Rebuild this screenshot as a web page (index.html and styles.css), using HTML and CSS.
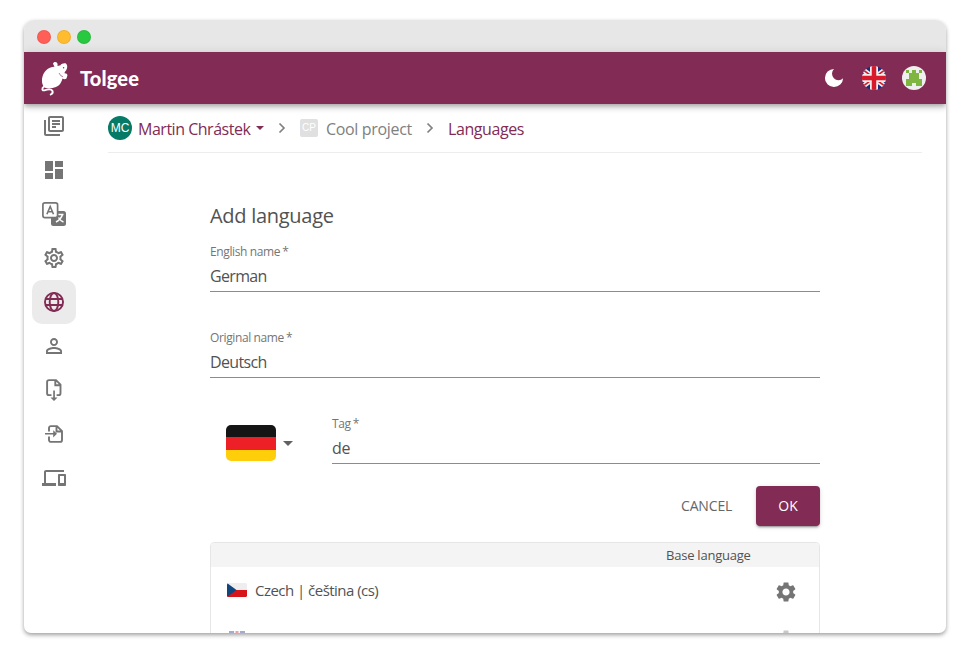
FILE: index.html
```
<!DOCTYPE html>
<html lang="en">
<head>
<meta charset="utf-8">
<title>Tolgee</title>
<link rel="stylesheet" href="styles.css">
</head>
<body>
<div class="window">
  <div class="titlebar"><span class="dot red"></span><span class="dot yellow"></span><span class="dot green"></span></div>
  <header class="appbar">
    <svg class="logo" viewBox="0 0 30 36" width="30" height="36" fill="#fff">
      <path d="M13 2.800C13.600.300 17.500.500 17.600 3.500L17.500 5Q19 4.400 20.200 4.600C21.500 2.300 26 1.500 26.700 3.500C28 5.500 27 9 24.800 11L24.500 12.200Q27.500 12.300 27.400 14.500L26.500 17.500Q24.500 19 22.500 17.500Q21 24 16 26Q10 28.500 5 26.800Q1.500 24.500 2 18C3 11 8 6 14.500 5.800Z"/>
      <path d="M4 25.500C1.500 27.500 2 30 4.500 29.300C8 28.200 11.500 28 12.500 30C13.200 31.800 12.200 32.800 10.700 33.500" fill="none" stroke="#fff" stroke-width="1.900" stroke-linecap="round"/>
      <circle cx="23.600" cy="6.700" r=".7" fill="#822b55"/>
      <path d="M19 12q1.500 3.500 4 3.700" fill="none" stroke="#822b55" stroke-width=".6"/>
    </svg>
    <span class="brand">Tolgee</span>
    <div class="tools">
      <svg width="20" height="20" viewBox="0 0 20 20"><path d="M10 .9A9.100 9.100 0 1 0 19.100 10.300 5.600 5.600 0 0 1 10 .9Z" fill="#fff"/></svg>
      <svg width="24" height="24" viewBox="0 0 24 24"><clipPath id="round"><circle cx="12" cy="12" r="12"/></clipPath><g clip-path="url(#round)"><path fill="#1a2b7b" d="M0 0h24v24H0z"/><path d="M-4 0 28 24M28 0-4 24" stroke="#eee" stroke-width="5"/><path d="M-4 0 28 24M28 0-4 24" stroke="#d8182b" stroke-width="1.600"/><path d="M12 0v24M0 12h24" stroke="#eee" stroke-width="8"/><path d="M12 0v24M0 12h24" stroke="#d8182b" stroke-width="4.500"/></g></svg>
      <svg width="24" height="24" viewBox="0 0 24 24"><circle cx="12" cy="12" r="12" fill="#efefef"/><path fill="#7fb541" d="M4 4h3v3H4zM17 4h3v3h-3zM10 4h4v3h3v6h3v7h-6v-3h-4v3H4v-7h3V7h3z"/></svg>
    </div>
  </header>
  <div class="body">
    <nav class="side">
      <a><svg viewBox="0 0 24 24"><path d="M4 6H2v14c0 1.100.9 2 2 2h14v-2H4V6zm16-4H8c-1.100 0-2 .9-2 2v12c0 1.100.9 2 2 2h12c1.100 0 2-.9 2-2V4c0-1.100-.9-2-2-2zm0 14H8V4h12v12zM10 9h8v2h-8zm0 3h4v2h-4zm0-6h8v2h-8z"/></svg></a>
      <a><svg viewBox="0 0 24 24"><path d="M3 13h8V3H3v10zm0 8h8v-6H3v6zm10 0h8V11h-8v10zm0-18v6h8V3h-8z"/></svg></a>
      <a><svg viewBox="0 0 24 24"><rect x="9" y="9" width="15" height="15" rx="2.500"/><path d="M16 12.500h5.500M20.500 12.500q-1.500 5-6.500 7.500M16.500 15.500q2 3.500 5 4.500" fill="none" stroke="#fff" stroke-width="1.500"/><rect x=".9" y=".9" width="14.700" height="14.700" rx="2" fill="#fff" stroke="#757575" stroke-width="1.700"/><path d="M4.900 12.200 8.200 4.500 11.500 12.200M6.200 9.800h4" fill="none" stroke="#757575" stroke-width="1.600"/></svg></a>
      <a><svg viewBox="0 0 24 24"><path d="M19.430 12.980c.04-.32.07-.64.07-.98 0-.34-.03-.66-.07-.98l2.110-1.650c.19-.15.24-.42.12-.64l-2-3.460c-.09-.16-.26-.25-.44-.25-.06 0-.12.01-.17.03l-2.490 1c-.52-.4-1.080-.73-1.690-.98l-.38-2.650C14.460 2.180 14.250 2 14 2h-4c-.25 0-.46.18-.49.42l-.38 2.650c-.61.25-1.170.59-1.690.98l-2.490-1c-.06-.02-.12-.03-.18-.03-.17 0-.34.09-.43.25l-2 3.460c-.13.22-.07.49.12.64l2.110 1.650c-.04.32-.07.65-.07.98 0 .33.03.66.07.98l-2.110 1.650c-.19.15-.24.42-.12.64l2 3.460c.09.16.26.25.44.25.06 0 .12-.01.17-.03l2.490-1c.52.4 1.080.73 1.690.98l.38 2.650c.03.24.24.42.49.42h4c.25 0 .46-.18.49-.42l.38-2.650c.61-.25 1.170-.59 1.690-.98l2.490 1c.06.02.12.03.18.03.17 0 .34-.09.43-.25l2-3.460c.12-.22.07-.49-.12-.64l-2.110-1.650zm-1.980-1.710c.04.31.05.52.05.73 0 .21-.02.43-.05.73l-.14 1.130.89.7 1.080.84-.7 1.210-1.270-.51-1.040-.42-.9.68c-.43.32-.84.56-1.250.73l-1.060.43-.16 1.130-.2 1.350h-1.400l-.19-1.350-.16-1.130-1.060-.43c-.43-.18-.83-.41-1.230-.71l-.91-.7-1.060.43-1.270.51-.7-1.210 1.080-.84.89-.7-.14-1.130c-.03-.31-.05-.54-.05-.74s.02-.43.05-.73l.14-1.130-.89-.7-1.080-.84.7-1.210 1.270.51 1.040.42.9-.68c.43-.32.84-.56 1.250-.73l1.060-.43.16-1.130.2-1.350h1.390l.19 1.350.16 1.130 1.060.43c.43.18.83.41 1.230.71l.91.7 1.060-.43 1.270-.51.7 1.210-1.070.85-.89.7.14 1.130zM12 8c-2.210 0-4 1.790-4 4s1.790 4 4 4 4-1.790 4-4-1.790-4-4-4zm0 6c-1.100 0-2-.9-2-2s.9-2 2-2 2 .9 2 2-.9 2-2 2z"/></svg></a>
      <a class="active"><svg viewBox="0 0 24 24"><g fill="none" stroke="#822b55" stroke-width="1.900"><circle cx="12" cy="12" r="9.050"/><ellipse cx="12" cy="12" rx="4.300" ry="9.050"/><path d="M3.500 9h17M3.500 15h17"/></g></svg></a>
      <a><svg viewBox="0 0 24 24"><path d="M12 5.900c1.160 0 2.100.94 2.100 2.100s-.94 2.100-2.100 2.100S9.900 9.160 9.900 8s.94-2.100 2.100-2.100m0 9c2.970 0 6.100 1.460 6.100 2.100v1.100H5.900V17c0-.64 3.130-2.100 6.100-2.100M12 4C9.790 4 8 5.790 8 8s1.790 4 4 4 4-1.790 4-4-1.790-4-4-4zm0 9c-2.670 0-8 1.340-8 4v3h16v-3c0-2.660-5.330-4-8-4z"/></svg></a>
      <a><svg viewBox="0 0 24 24"><path d="M9.500 17.100H7a1.900 1.900 0 0 1-1.900-1.900V4A1.900 1.900 0 0 1 7 2.100h7l4.500 4.500v8.600a1.900 1.900 0 0 1-1.900 1.900h-2M13.300 2.300v4.900h5" fill="none" stroke="#757575" stroke-width="1.900"/><path d="M11.200 12.500h1.700v7h2.600L12 23l-3.500-3.500h2.700z"/></svg></a>
      <a><svg viewBox="0 0 24 24"><path d="M7 9.500V6A1.900 1.900 0 0 1 8.900 4.100H15l5 5V18a1.900 1.900 0 0 1-1.900 1.900H8.900A1.900 1.900 0 0 1 7 18v-3.500M14.500 4.300v5.200h5.300" fill="none" stroke="#757575" stroke-width="1.900"/><path d="M3 12.500v-1.600h8.200V8.200L15 11.700l-3.800 3.700v-2.900z"/></svg></a>
      <a><svg viewBox="0 0 24 24"><path d="M4 6h18V4H4c-1.100 0-2 .9-2 2v11H0v3h14v-3H4V6zm19 2h-6c-.55 0-1 .45-1 1v10c0 .55.45 1 1 1h6c.55 0 1-.45 1-1V9c0-.55-.45-1-1-1zm-1 9h-4v-7h4v7z"/></svg></a>
    </nav>
    <main class="main">
      <div class="crumbs">
        <span class="avatar">MC</span><span class="link owner">Martin Chrástek</span><span class="caret link"></span>
        <svg class="chev" width="8" height="12" viewBox="0 0 8 12"><path d="m1.500 1.500 4.500 4.500L1.500 10.500"/></svg>
        <span class="square">CP</span><span class="project">Cool project</span>
        <svg class="chev" width="8" height="12" viewBox="0 0 8 12"><path d="m1.500 1.500 4.500 4.500L1.500 10.500"/></svg>
        <span class="link langs">Languages</span>
      </div>
      <div class="form">
        <h1>Add language</h1>
        <label class="field"><span class="label">English name<i>*</i></span><span class="value">German</span></label>
        <label class="field"><span class="label">Original name<i>*</i></span><span class="value">Deutsch</span></label>
        <div class="tagrow">
          <svg class="flag" width="50" height="36" viewBox="0 0 50 36"><clipPath id="flagclip"><rect width="50" height="36" rx="5"/></clipPath><g clip-path="url(#flagclip)"><path fill="#151515" d="M0 0h50v12H0z"/><path fill="#ee2027" d="M0 12h50v13H0z"/><path fill="#ffce0b" d="M0 25h50v11H0z"/></g></svg>
          <span class="caret big"></span>
          <label class="field tag"><span class="label">Tag<i>*</i></span><span class="value">de</span></label>
        </div>
        <div class="actions"><span class="cancel">CANCEL</span><span class="ok">OK</span></div>
        <div class="table">
          <div class="thead"><span>Base language</span></div>
          <div class="row">
            <svg class="mini" width="20" height="14" viewBox="0 0 20 14"><clipPath id="smallclip"><rect width="20" height="14" rx="1.500"/></clipPath><g clip-path="url(#smallclip)"><path fill="#eee" d="M0 0h20v7H0z"/><path fill="#d7141a" d="M0 7h20v7H0z"/><path fill="#11457e" d="M0 0l9.500 7L0 14z"/></g></svg>
            <span class="name">Czech | čeština (cs)</span>
            <svg class="gear" width="24" height="24" viewBox="0 0 24 24"><path id="gear" d="M19.140 12.940c.04-.3.06-.61.06-.94 0-.32-.02-.64-.07-.94l2.030-1.580c.18-.14.23-.41.12-.61l-1.920-3.320c-.12-.22-.37-.29-.59-.22l-2.390.96c-.5-.38-1.030-.7-1.620-.94l-.36-2.540c-.04-.24-.24-.41-.48-.41h-3.840c-.24 0-.43.17-.47.41l-.36 2.540c-.59.24-1.130.57-1.620.94l-2.390-.96c-.22-.08-.47 0-.59.22L2.740 8.870c-.12.21-.08.47.12.61l2.030 1.580c-.05.3-.09.63-.09.94s.02.64.07.94l-2.030 1.580c-.18.14-.23.41-.12.61l1.920 3.320c.12.22.37.29.59.22l2.390-.96c.5.38 1.030.7 1.620.94l.36 2.540c.05.24.24.41.48.41h3.840c.24 0 .44-.17.47-.41l.36-2.540c.59-.24 1.130-.56 1.620-.94l2.390.96c.22.08.47 0 .59-.22l1.920-3.320c.12-.22.07-.47-.12-.61l-2.010-1.580zM12 15.600c-1.980 0-3.600-1.620-3.600-3.600s1.620-3.600 3.600-3.600 3.600 1.620 3.600 3.600-1.620 3.600-3.600 3.600z"/></svg>
          </div>
          <div class="row peek">
            <svg class="mini" width="20" height="14" viewBox="0 0 20 14"><path fill="#1a2b7b" d="M2 0h16v14H2z"/><path d="M10 0v14" stroke="#eee" stroke-width="6"/><path d="M10 0v14" stroke="#d8182b" stroke-width="3"/></svg>
            <svg class="gear" width="24" height="24" viewBox="0 0 24 24"><use href="#gear"/></svg>
          </div>
        </div>
      </div>
    </main>
  </div>
</div>
</body>
</html>
```
FILE: styles.css
```
* { box-sizing: border-box; }
body { margin: 0; padding: 20px 24px 28px; height: 661px; overflow: hidden; background: #fff; font-family: "Open Sans", "Noto Sans", sans-serif; color: #525252; }
.window { width: 922px; height: 613px; display: flex; flex-direction: column; overflow: hidden; border-radius: 10px 10px 7px 7px; background: #fff; box-shadow: 0 2px 4px rgba(0,0,0,.38); }
.titlebar { flex: 0 0 32px; display: flex; align-items: center; gap: 6px; padding: 2px 13px 0; background: #e7e7e7; }
.dot { width: 14px; height: 14px; border-radius: 50%; border: 1px solid rgba(0,0,0,.06); }
.red { background: #ff5f57; }
.yellow { background: #febc2e; }
.green { background: #28c840; }
.appbar { flex: 0 0 52px; display: flex; align-items: center; padding: 0 20px 0 16px; background: #822b55; position: relative; box-shadow: 0 2px 4px -1px rgba(0,0,0,.2), 0 4px 5px rgba(0,0,0,.14), 0 1px 10px rgba(0,0,0,.12); }
.logo { margin-top: 2px; }
.brand { margin-left: 10px; font: 900 20px/26px Lato, sans-serif; letter-spacing: .15px; color: #fff; white-space: nowrap; }
.tools { margin-left: auto; display: flex; align-items: center; }
.tools svg + svg { margin-left: 16px; }
.tools svg:nth-child(2) { margin-left: 18px; }
.body { flex: 1; min-height: 0; display: flex; }
.side { flex: 0 0 84px; padding-left: 8px; }
.side a { display: grid; place-items: center; width: 44px; height: 44px; border-radius: 10px; }
.side svg { width: 24px; height: 24px; fill: #757575; }
.side .active { background: #ebebeb; }
.main { flex: 0 0 814px; }
.crumbs { display: flex; align-items: center; height: 49px; border-bottom: 1px solid #ededed; font-size: 16px; line-height: 24px; white-space: nowrap; color: #808080; }
.link { color: #822b55; }
.avatar { width: 24px; height: 24px; border-radius: 50%; background: #057a66; color: #fff; text-align: center; font: 12px/24px "Liberation Sans", sans-serif; }
.owner { width: 112px; margin: 2px 6px 0; letter-spacing: -.48px; }
.caret { width: 0; height: 0; border: 4px solid transparent; border-top: 4px solid #822b55; border-bottom: 0; }
.chev { margin: 0 14px; fill: none; stroke: #808080; stroke-width: 1.700; }
.square { width: 18px; height: 18px; border-radius: 2px; background: #e0e0e0; color: #fff; text-align: center; font: 10px/18px "Liberation Sans", sans-serif; }
.project { width: 86px; margin: 2px 0 0 8px; letter-spacing: -.33px; }
.langs { margin-top: 2px; letter-spacing: -.42px; }
.form { width: 610px; margin: 49px 0 0 102px; }
h1 { margin: 0; height: 40px; font-size: 20px; line-height: 28px; font-weight: 400; letter-spacing: -.28px; }
.field { display: block; height: 86px; }
.label { display: block; font-size: 12px; line-height: 20px; color: #757575; white-space: nowrap; letter-spacing: -.38px; }
.label i { font-style: normal; margin-left: 2px; }
.value { display: block; height: 30px; font-size: 16px; line-height: 28px; letter-spacing: -.65px; border-bottom: 1px solid #8c8c8c; }
.tagrow { display: flex; height: 72px; }
.flag { margin: 11px 0 0 16px; }
.caret.big { border-width: 5px 5px 0; border-top-color: #616161; margin: 27px 0 0 7px; }
.tag { width: 488px; margin-left: 39px; }
.tag .value { letter-spacing: -.3px; }
.actions { display: flex; justify-content: flex-end; align-items: center; height: 40px; font-size: 14px; }
.cancel { width: 51px; margin: -1px 24px 0 0; color: #666; white-space: nowrap; letter-spacing: -.15px; }
.ok { width: 64px; height: 40px; border-radius: 4px; background: #822b55; color: #fff; text-align: center; line-height: 40px; box-shadow: 0 3px 1px -2px rgba(0,0,0,.2), 0 2px 2px rgba(0,0,0,.14), 0 1px 5px rgba(0,0,0,.12); }
.table { margin-top: 16px; height: 200px; border: 1px solid #e6e6e6; border-radius: 4px; overflow: hidden; }
.thead { height: 24px; padding-left: 455px; background: #f4f4f4; font-size: 13px; line-height: 25px; letter-spacing: -.23px; }
.row { display: flex; align-items: center; height: 48px; padding: 0 21px 0 16px; }
.mini { margin-top: -2px; }
.name { margin: -2px 0 0 8px; font-size: 15px; white-space: nowrap; letter-spacing: -.53px; }
.gear { margin: 2px 0 0 auto; fill: #757575; }
.peek { opacity: .4; }
```
